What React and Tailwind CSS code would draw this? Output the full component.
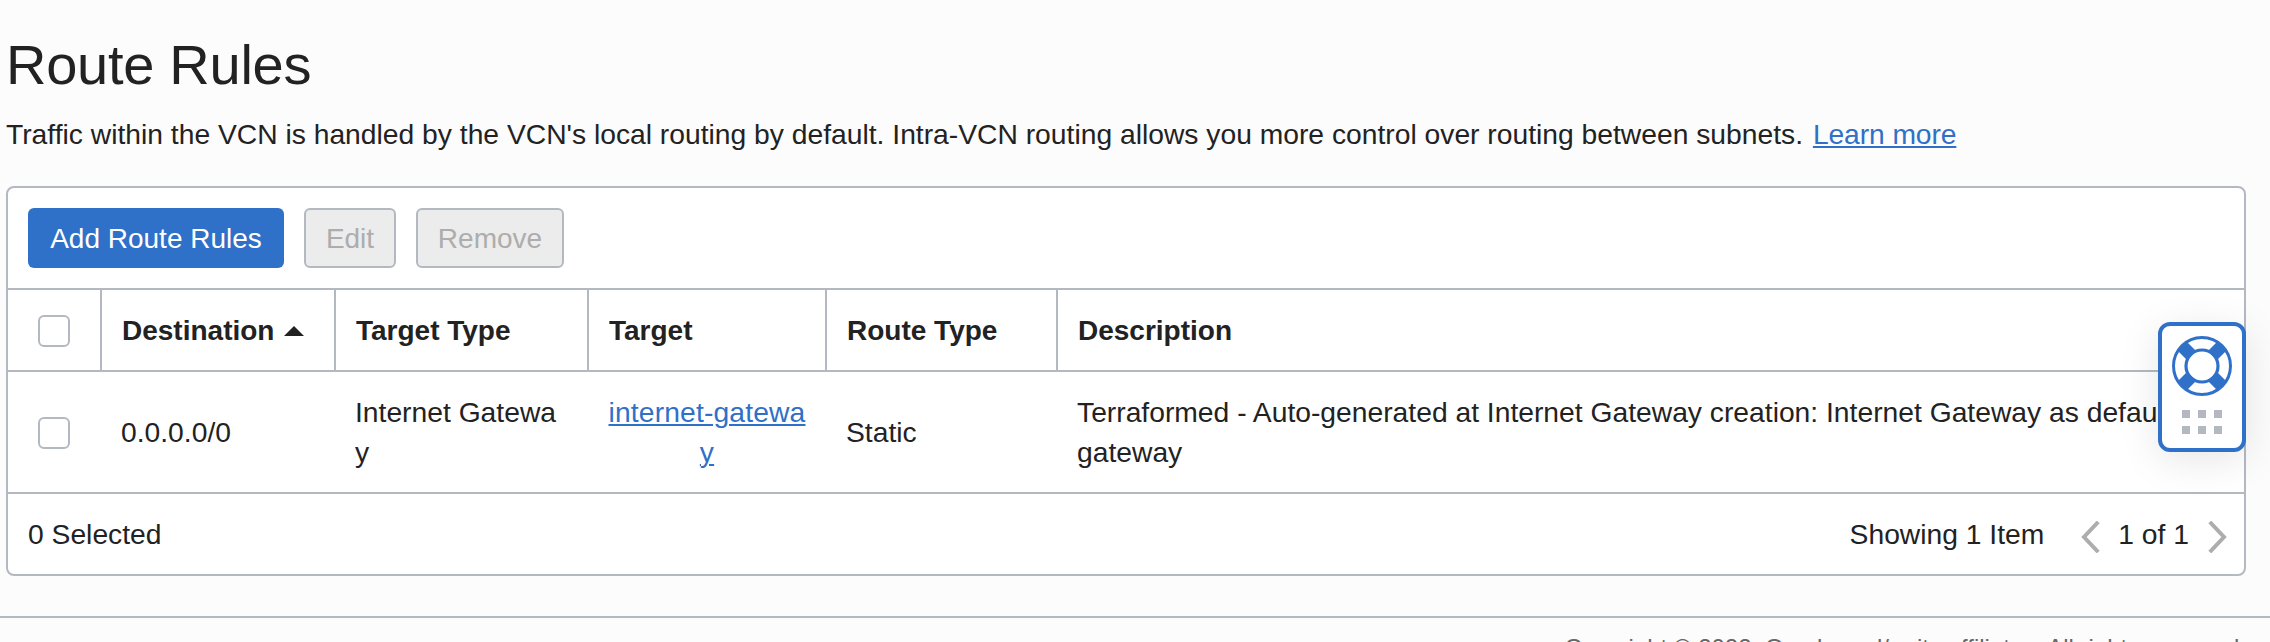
const Check = () => (
  <span className="block size-8 rounded-md border-2 border-[#b4b8c0] bg-white" />
);

const headers = "border-l-2 border-[#b4b8c0] pl-5 pt-0.5 flex items-center text-[28px] font-bold";

function Life() {
  return (
    <svg className="block size-[60px]" viewBox="0 0 60 60" fill="none">
      <circle cx="30" cy="30" r="28.5" stroke="#2f70c8" strokeWidth="3" />
      <circle cx="30" cy="30" r="16" stroke="#2f70c8" strokeWidth="3.2" />
      <path
        d="M19.5 19.5 10.5 10.5M40.5 19.5 49.5 10.5M19.5 40.5 10.5 49.5M40.5 40.5 49.5 49.5"
        stroke="#2f70c8"
        strokeWidth="12.8"
      />
    </svg>
  );
}

export default function App() {
  return (
    <div className="relative h-[642px] w-[2270px] overflow-hidden bg-[#fcfcfc] font-['Liberation_Sans',sans-serif] text-[28.25px] leading-10 text-[#222]">
      <h1 className="h-[114px] pl-1.5 pt-[33px] text-[56px] leading-[64px] tracking-[-0.27px]">Route Rules</h1>
      <p className="h-[72px] pl-1.5">
        <span>Traffic within the VCN is handled by the VCN's local routing by default. Intra-VCN routing allows you more control over routing between subnets. </span>
        <a className="ml-0.5 tracking-[-0.1px] text-[#2f70c8] underline decoration-2 underline-offset-2">Learn more</a>
      </p>
      <div className="ml-1.5 h-[390px] w-[2240px] rounded-lg border-2 border-[#b4b8c0] bg-white">
        <div className="flex h-[102px] items-start gap-5 border-b-2 border-[#b4b8c0] pl-5 pt-5 text-[28px]">
          <button className="h-[60px] w-64 rounded-md bg-[#2f70c8] pt-0.5 text-white">Add Route Rules</button>
          <button className="h-[60px] w-[92px] rounded-md border-2 border-[#b4b8c0] bg-[#ececec] pt-0.5 text-[#adadad]">Edit</button>
          <button className="h-[60px] w-[148px] rounded-md border-2 border-[#b4b8c0] bg-[#ececec] pt-0.5 text-[#adadad]">Remove</button>
        </div>
        <div className="grid h-[82px] grid-cols-[92px_234px_253px_238px_231px_1fr] border-b-2 border-[#b4b8c0]">
          <div className="flex items-center pl-[30px] pt-0.5"><Check /></div>
          <div className={headers}>
            <span>Destination</span>
            <svg className="ml-2.5 h-[10px] w-5" viewBox="0 0 20 10"><path d="M0 10 10 0l10 10z" fill="#222" /></svg>
          </div>
          <div className={headers}>Target Type</div>
          <div className={headers}>Target</div>
          <div className={headers}>Route Type</div>
          <div className={headers}>Description</div>
        </div>
        <div className="grid h-[122px] grid-cols-[92px_234px_253px_238px_231px_1fr] items-center border-b-2 border-[#b4b8c0]">
          <div className="pl-[30px] pt-0.5"><Check /></div>
          <div className="pl-[21px]">0.0.0.0/0</div>
          <div className="pl-[21px]">Internet Gatewa<br />y</div>
          <div className="pl-[21px] pr-[19px] text-center tracking-[0.15px] text-[#2f70c8] underline decoration-2 underline-offset-2">internet-gatewa<br />y</div>
          <div className="pl-[21px]">Static</div>
          <div className="whitespace-nowrap pl-[21px]">Terraformed - Auto-generated at Internet Gateway creation: Internet Gateway as default<br />gateway</div>
        </div>
        <div className="flex h-20 items-center justify-between pl-5 pr-[17px]">
          <span>0 Selected</span>
          <div className="flex items-center">
            <span>Showing 1 Item</span>
            <svg className="ml-[37px] mt-1.5 h-8 w-[19px]" viewBox="0 0 19 32" fill="none" stroke="#adadad" strokeWidth="4"><path d="M17.2 1 3 16l14.2 15" /></svg>
            <span className="ml-[18px] mr-[19px]">1 of 1</span>
            <svg className="mt-1.5 h-8 w-[19px]" viewBox="0 0 19 32" fill="none" stroke="#adadad" strokeWidth="4"><path d="M1.8 1 16 16 1.8 31" /></svg>
          </div>
        </div>
      </div>
      <footer className="mt-10 border-t-2 border-[#b4b8c0] pr-6 pt-2.5 text-right text-[24px] text-[#666]">
        Copyright © 2022, Oracle and/or its affiliates. All rights reserved.
      </footer>
      <div className="absolute left-[2158px] top-[322px] flex h-[130px] w-[88px] flex-col items-center rounded-[12px] border-4 border-[#2f70c8] bg-white pt-2.5 shadow-[0_8px_40px_rgba(0,0,0,0.1)]">
        <Life />
        <div className="mt-3.5 grid grid-cols-3 gap-2">
          {[0, 1, 2, 3, 4, 5].map((i) => <span key={i} className="size-2 bg-[#b4b8c0]" />)}
        </div>
      </div>
    </div>
  );
}
